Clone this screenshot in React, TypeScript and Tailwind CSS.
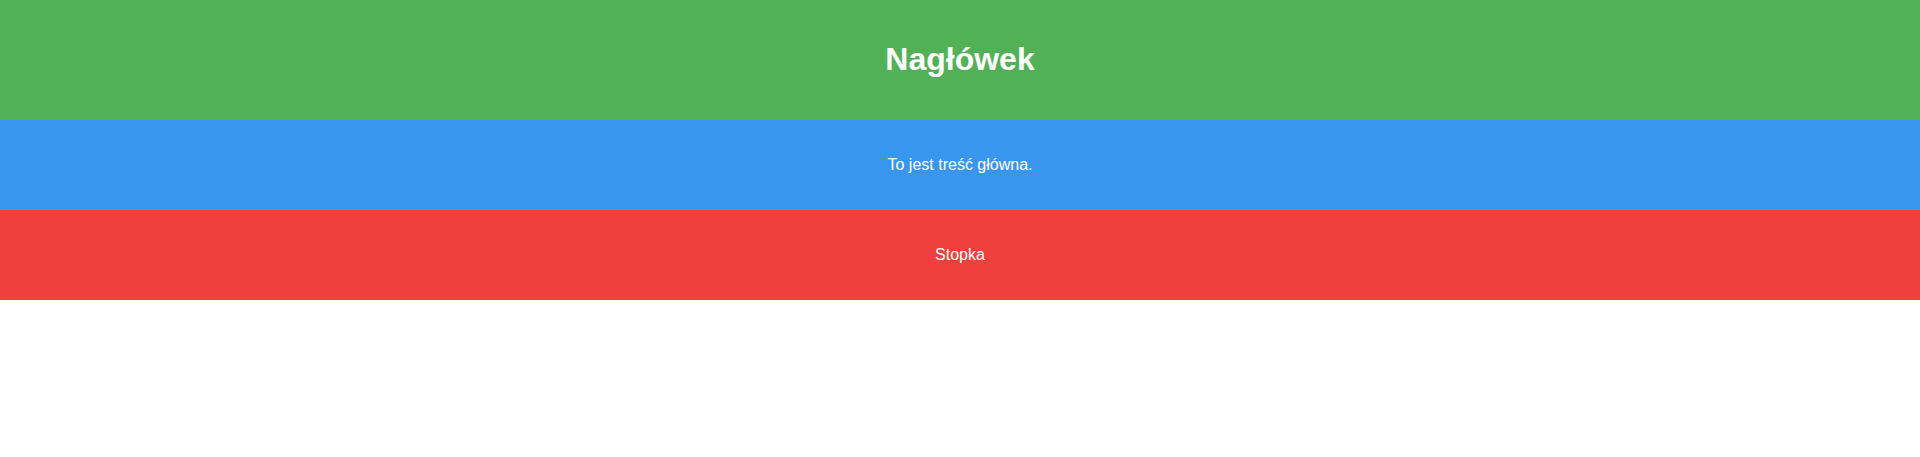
export default function App() {
  return (
    <div className="font-['Liberation_Sans',Arial,sans-serif] text-white text-center">
      {/* Header */}
      <header className="bg-[#52b157] p-5">
        <h1 className="text-[32px] leading-[36.8px] font-bold my-[21.44px]">Nagłówek</h1>
      </header>

      {/* Main */}
      <main className="bg-[#3896ef] p-5">
        <p className="text-base leading-[18.4px] my-4">To jest treść główna.</p>
      </main>

      {/* Footer */}
      <footer className="bg-[#ef403d] p-5">
        <p className="text-base leading-[18.4px] my-4">Stopka</p>
      </footer>
    </div>
  )
}
